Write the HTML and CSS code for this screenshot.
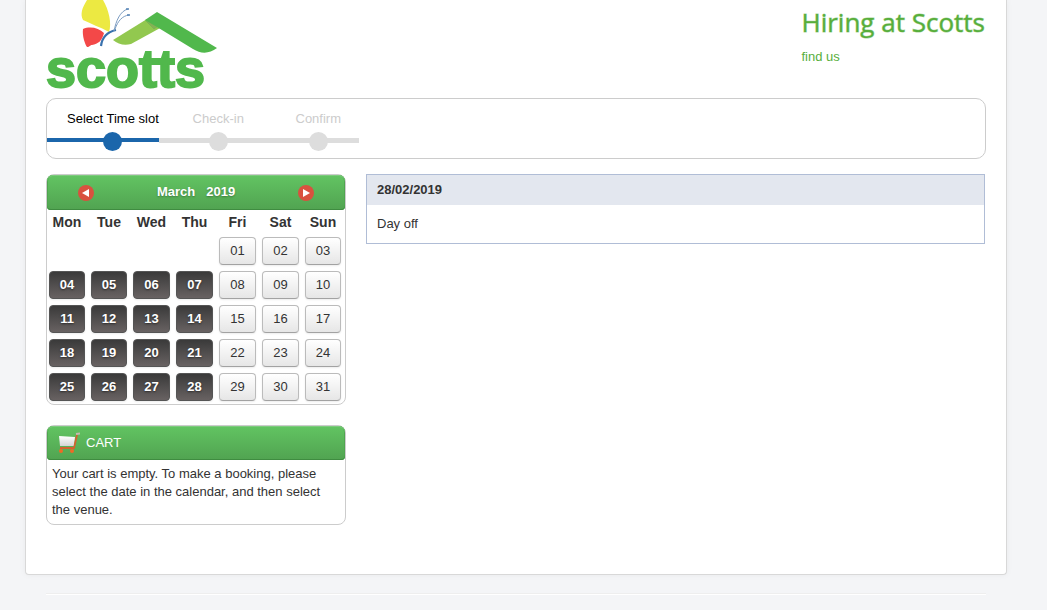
FILE: index.html
```html
<!DOCTYPE html>
<html lang="en">
<head>
<meta charset="utf-8">
<title>Hiring at Scotts</title>
<link rel="stylesheet" href="styles.css">
</head>
<body>
<main class="page">
  <header class="header">
    <svg class="logo" width="172" height="96" viewBox="0 0 172 96" role="img" aria-label="scotts">
      <path d="M41 0C36 8 34 14 37 20C45 24 54 27 63 32C66 24 63 10 57 0Z" fill="#ece942"/>
      <path d="M37 29C44 26 53 28 58 33C56 41 52 44 46 45C44 45 44 47 41 47C39 44 36 36 37 29Z" fill="#f34848"/>
      <path d="M55 46C56 38 61 32 70 30" fill="none" stroke="#3871ad" stroke-width="2.2"/>
      <path d="M68 31C70 21 74 11 82 9M69 29C72 21 76 16 83 15" fill="none" stroke="#7d9dc2" stroke-width="1"/>
      <path d="M80 9h3M81 15h3" stroke="#5584b7" stroke-width="1.5"/>
      <path d="M67 40L101 19L116 27L85 44C78 46 72 44 67 40Z" fill="#92c84f"/>
      <path d="M99 20L111 12L171 48C163 54 155 54 147 49L111 27L108 29Z" fill="#51b84c"/>
      <path d="M99 20L111 27L108 29Z" fill="#86b055"/>
      <text class="logo-text" x="0" y="87">scotts</text>
    </svg>
    <div class="heading">
      <h1>Hiring at Scotts</h1>
      <a href="#find">find us</a>
    </div>
  </header>

  <ol class="steps">
    <li class="step current"><span>Select Time slot</span><i class="dot"></i></li>
    <li class="step checkin"><span>Check-in</span><i class="dot"></i></li>
    <li class="step confirm"><span>Confirm</span><i class="dot"></i></li>
  </ol>

  <div class="columns">
    <aside class="sidebar">
      <section class="box calendar">
        <div class="bar month">
          <button class="nav" type="button" aria-label="Previous month"><svg width="16" height="16" viewBox="0 0 16 16"><circle cx="8" cy="8" r="8" fill="#d9513f"/><path d="M11 4V12L4 8Z" fill="#fff"/></svg></button>
          <h2><span>March</span><span>2019</span></h2>
          <button class="nav" type="button" aria-label="Next month"><svg width="16" height="16" viewBox="0 0 16 16"><circle cx="8" cy="8" r="8" fill="#d9513f"/><path d="M5 4V12L12 8Z" fill="#fff"/></svg></button>
        </div>
        <table>
          <colgroup><col class="narrow"><col class="narrow"><col><col><col><col><col class="narrow"></colgroup>
          <thead><tr><th>Mon</th><th>Tue</th><th>Wed</th><th>Thu</th><th>Fri</th><th>Sat</th><th>Sun</th></tr></thead>
          <tbody>
            <tr><td colspan="4"></td><td><button class="day">01</button></td><td><button class="day">02</button></td><td><button class="day">03</button></td></tr>
            <tr><td><button class="day open">04</button></td><td><button class="day open">05</button></td><td><button class="day open">06</button></td><td><button class="day open">07</button></td><td><button class="day">08</button></td><td><button class="day">09</button></td><td><button class="day">10</button></td></tr>
            <tr><td><button class="day open">11</button></td><td><button class="day open">12</button></td><td><button class="day open">13</button></td><td><button class="day open">14</button></td><td><button class="day">15</button></td><td><button class="day">16</button></td><td><button class="day">17</button></td></tr>
            <tr><td><button class="day open">18</button></td><td><button class="day open">19</button></td><td><button class="day open">20</button></td><td><button class="day open">21</button></td><td><button class="day">22</button></td><td><button class="day">23</button></td><td><button class="day">24</button></td></tr>
            <tr><td><button class="day open">25</button></td><td><button class="day open">26</button></td><td><button class="day open">27</button></td><td><button class="day open">28</button></td><td><button class="day">29</button></td><td><button class="day">30</button></td><td><button class="day">31</button></td></tr>
          </tbody>
        </table>
      </section>
      <section class="box cart">
        <div class="bar cart-bar">
          <svg width="24" height="22" viewBox="0 0 24 22" aria-hidden="true">
            <defs><linearGradient id="basket" x2="0" y2="1"><stop stop-color="#fff"/><stop offset="1" stop-color="#d4d4d4"/></linearGradient></defs>
            <path d="M3 4L19 5L18 14H4Z" fill="url(#basket)"/>
            <path d="M4 16H18L21 3" fill="none" stroke="#d2622f" stroke-width="1.8"/>
            <path d="M20 2L24 1.500" stroke="#c9b7b0" stroke-width="2"/>
            <circle cx="5" cy="19" r="2" fill="#ef6a25"/><circle cx="16" cy="19" r="2" fill="#ef6a25"/>
          </svg>
          <h2>CART</h2>
        </div>
        <p>Your cart is empty. To make a booking, please select the date in the calendar, and then select the venue.</p>
      </section>
    </aside>
    <section class="schedule">
      <h2>28/02/2019</h2>
      <p>Day off</p>
    </section>
  </div>
</main>
<footer class="footer"></footer>
</body>
</html>
```
FILE: styles.css
```css
* { box-sizing: border-box; }
body {
  margin: 0;
  padding: 0 15px 0 0;
  background: #f4f5f7;
  color: #333;
  font: 13px/18px "Liberation Sans", Arial, sans-serif;
}
h1, h2, p { margin: 0; }
h2 { font-size: 13px; line-height: 18px; }
button { font: inherit; cursor: pointer; }
.page {
  max-width: 982px;
  margin: 0 auto;
  padding: 0 20px 49px;
  background: #fff;
  border: 1px solid #d8d8d8;
  border-top: 0;
  border-radius: 0 0 4px 4px;
  box-shadow: 0 0 6px rgba(0, 0, 0, .05);
}
.header { display: flex; justify-content: space-between; height: 98px; }
.logo { overflow: visible; }
.logo-text {
  font: bold 54px "Liberation Sans", Arial, sans-serif;
  fill: #51b84c;
  stroke: #51b84c;
  stroke-width: 2px;
}
.heading { padding: 3px 1px 0 0; color: #57ae3b; }
.heading h1 {
  font: 400 26px/38px "Open Sans", sans-serif;
  -webkit-text-stroke: 1px rgba(87, 174, 59, .5);
  margin-bottom: 7px;
}
.heading a { color: #57ae3b; text-decoration: none; }
.steps {
  display: flex;
  margin: 0 0 15px;
  padding: 11px 0 7px;
  list-style: none;
  border: 1px solid #ccc;
  border-radius: 10px;
}
.step {
  display: flex;
  flex-direction: column;
  align-items: center;
  gap: 4px;
  color: #ccc;
  background: linear-gradient(#ddd, #ddd) 0 28px / 100% 5px no-repeat;
}
.current {
  padding-left: 20px;
  color: #000;
  background: linear-gradient(#1b66ab, #1b66ab) 0 28px / 100% 4px no-repeat;
}
.checkin { width: 119px; }
.confirm { width: 81px; }
.dot { width: 19px; height: 19px; border-radius: 50%; background: #ddd; }
.current .dot { background: #1b66ab; }
.columns { display: flex; align-items: flex-start; gap: 20px; }
.sidebar { width: 300px; flex: none; }
.box { border: 1px solid #ccc; border-radius: 8px; margin-bottom: 20px; }
.cart { margin-bottom: 0; }
.bar {
  display: flex;
  align-items: center;
  height: 34px;
  color: #fff;
  background: linear-gradient(#62c462, #51a351);
  border-radius: 6px 6px 4px 4px;
  box-shadow: inset 0 1px #7ecb7e, inset 0 -1px #3f8c40, inset 1px 0 #4fa54f, inset -1px 0 #4fa54f;
}
.month { justify-content: space-between; height: 35px; padding: 0 31px 2px; }
.month h2 { display: flex; gap: 11px; text-shadow: 0 1px 2px rgba(0, 0, 0, .3); }
.nav { padding: 2px 0 0; border: 0; background: none; height: 18px; }
.nav svg { display: block; }
table { width: 100%; table-layout: fixed; border-collapse: collapse; }
.narrow { width: 42px; }
th { padding: 3px 2px 6px 0; font-size: 14px; line-height: 18px; }
td { padding: 0 4px 6px 2px; }
tr:last-child td { padding-bottom: 3px; }
.day {
  display: block;
  width: 100%;
  height: 28px;
  padding: 0;
  color: #333;
  border: 1px solid #bbb;
  border-bottom-color: #a2a2a2;
  border-radius: 4px;
  background: linear-gradient(#fff, #e6e6e6);
  box-shadow: 0 1px 2px rgba(0, 0, 0, .08);
}
.open {
  color: #fff;
  font-weight: bold;
  border-color: #555;
  background: linear-gradient(#3a3a3a, #686262);
  text-shadow: 0 1px 2px rgba(0, 0, 0, .5);
}
.cart-bar { padding-left: 9px; gap: 6px; }
.cart-bar h2 { font-weight: 400; }
.cart p { padding: 5px; }
.schedule { flex: 1; margin-right: 1px; border: 1px solid #b0bdd6; }
.schedule h2 { padding: 6px 10px; background: #e3e7ef; }
.schedule p { padding: 10px; }
.footer {
  max-width: 940px;
  margin: 18px auto 0;
  border-top: 1px solid #eee;
  border-bottom: 1px solid #fff;
}
```
